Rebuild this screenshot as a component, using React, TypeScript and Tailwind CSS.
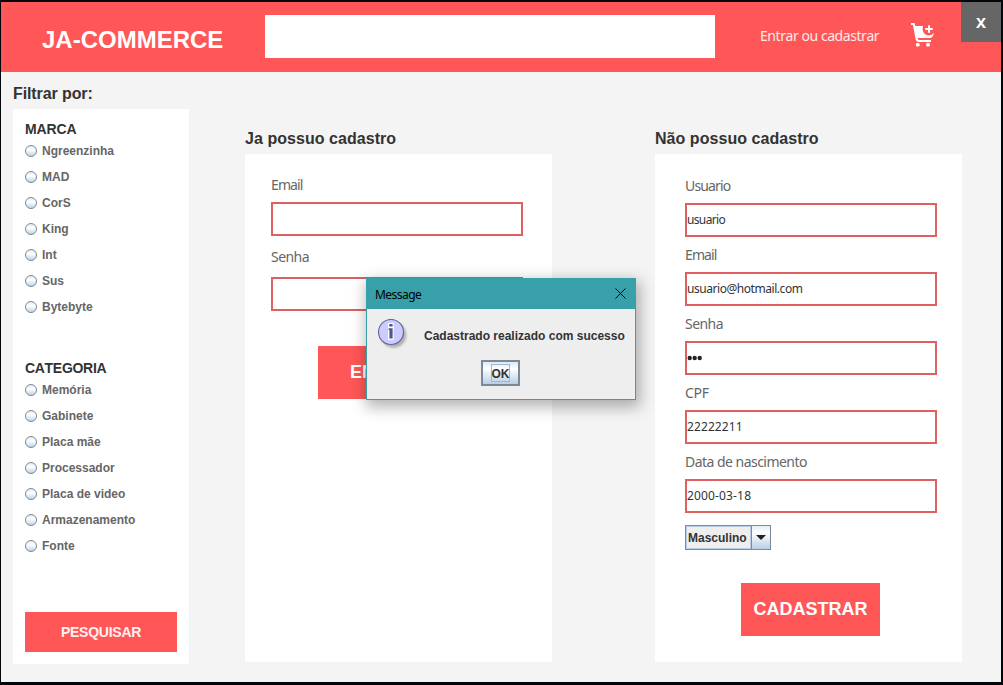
import React from "react";

const tahoma = "font-['Noto_Sans',sans-serif] font-normal";

function Radio({ label }: { label: string }) {
  return (
    <label className="flex h-[26px] items-center text-[12px] font-bold text-[#666]">
      <svg width="13" height="13" viewBox="0 0 13 13" className="mr-[4px] shrink-0">
        <defs>
          <linearGradient id="radio" x1="0" y1="0" x2="0" y2="1">
            <stop offset="0" stopColor="#dde8f3" />
            <stop offset=".4" stopColor="#ffffff" />
            <stop offset="1" stopColor="#b8cfe5" />
          </linearGradient>
        </defs>
        <circle cx="6" cy="6" r="5.5" fill="url(#radio)" stroke="#7a8a99" strokeWidth="1" />
      </svg>
      {label}
    </label>
  );
}

type FieldProps = {
  label: string;
  labelClass: string;
  value?: React.ReactNode;
  valueClass?: string;
  gap?: string;
};

function Field({ label, labelClass, value, valueClass = "", gap = "gap-[7px]" }: FieldProps) {
  return (
    <div className={"flex flex-col " + gap}>
      <span className={tahoma + " h-[20px] whitespace-nowrap text-[14px] leading-[20px] text-[#666] " + labelClass}>{label}</span>
      <div className={tahoma + " flex h-[34px] w-[252px] items-center border-2 border-[#de6060] bg-white text-[12px] text-[#333] " + valueClass}>
        {value}
      </div>
    </div>
  );
}

function Bullets() {
  return (
    <svg width="16" height="6" viewBox="0 0 16 6" fill="#222">
      <circle cx="2.7" cy="3" r="2.2" />
      <circle cx="7.7" cy="3" r="2.2" />
      <circle cx="12.7" cy="3" r="2.2" />
    </svg>
  );
}

function CartIcon() {
  return (
    <svg width="24" height="25" viewBox="0 0 24 25" fill="none">
      <path d="M0 1H2.8L5.3 14.5Q5.8 18 8 18H20" stroke="#fff" strokeWidth="2" />
      <path d="M2.6 3H12C10.6 7.6 13 12.4 18 12.4Q21 12.2 22.9 10Q22 15 18.5 15H5.4Z" fill="#fff" />
      <path d="M18 2.2V9.8M14.2 6H21.8" stroke="#fff" strokeWidth="2" />
      <circle cx="6.8" cy="21.8" r="2" fill="#fff" />
      <circle cx="17" cy="21.8" r="2" fill="#fff" />
    </svg>
  );
}

function InfoIcon() {
  return (
    <svg width="32" height="32" viewBox="0 0 32 32">
      <defs>
        <filter id="soft" x="-20%" y="-20%" width="140%" height="140%">
          <feGaussianBlur stdDeviation="1.2" />
        </filter>
      </defs>
      <circle cx="15.5" cy="16" r="12.8" fill="#888" opacity=".6" filter="url(#soft)" />
      <circle cx="13" cy="13" r="12.5" fill="#ccccff" stroke="#666699" strokeWidth="1.2" />
      <path d="M10 4H15.6V20.8H10V10.5H10V8.2H10Z" fill="#fff" />
      <path d="M11.3 5H14.6V7.4H11.3ZM10.6 9.2H14.6V19.6H11.4V11H10.6Z" fill="#555588" />
    </svg>
  );
}

const brands = ["Ngreenzinha", "MAD", "CorS", "King", "Int", "Sus", "Bytebyte"];
const categories = ["Memória", "Gabinete", "Placa mãe", "Processador", "Placa de video", "Armazenamento", "Fonte"];

export default function App() {
  return (
    <div className="relative h-[685px] w-[1003px] overflow-hidden bg-[#02060b] pl-px pt-[2px] font-['Liberation_Sans',Arial,sans-serif] [font-kerning:none]">
      <div className="flex h-[680px] w-[1000px] flex-col bg-[#f4f4f4]">
        <header className="flex h-[70px] items-start bg-[#ff5757] text-white">
          <h1 className="ml-[41px] mt-[23px] w-[223px] text-[24px] font-bold leading-[30px]">JA-COMMERCE</h1>
          <div className="mt-[13px] h-[43px] w-[450px] bg-white" />
          <span className={tahoma + " ml-[45px] mt-[24px] w-[151px] whitespace-nowrap text-[14px] leading-[20px] tracking-[-0.44px] text-[#ffeaea]"}>Entrar ou cadastrar</span>
          <div className="mt-[21px] w-[50px]"><CartIcon /></div>
          <button className="h-[40px] w-[40px] bg-[#666] pt-px font-['Noto_Sans',sans-serif] text-[15px] font-bold">X</button>
        </header>

        <div className="flex items-start">
          <aside className="ml-[12px] mt-[12px] w-[176px]">
            <h2 className="h-[25px] text-[16px] font-bold leading-[20px] tracking-[-0.1px] text-[#333]">Filtrar por:</h2>
            <div className="flex h-[555px] flex-col bg-white px-[12px] pt-[12px]">
              <h3 className="h-[17px] text-[14px] font-bold leading-[17px] tracking-[-0.1px] text-[#333]">MARCA</h3>
              {brands.map((b) => <Radio key={b} label={b} />)}
              <h3 className="mt-[40px] h-[17px] text-[14px] font-bold leading-[17px] tracking-[-0.3px] text-[#333]">CATEGORIA</h3>
              {categories.map((c) => <Radio key={c} label={c} />)}
              <button className="mt-[53px] h-[40px] w-[152px] bg-[#ff5757] text-[14px] font-bold tracking-[-0.25px] text-[#fff0f0]">PESQUISAR</button>
            </div>
          </aside>

          <section className="ml-[56px] mt-[57px] w-[307px]">
            <h2 className="h-[25px] text-[16px] font-bold leading-[20px] tracking-[0.05px] text-[#333]">Ja possuo cadastro</h2>
            <div className="flex h-[508px] flex-col bg-white pl-[26px] pt-[21px]">
              <Field label="Email" labelClass="tracking-[-0.9px]" />
              <div className="h-[11px]" />
              <Field label="Senha" labelClass="tracking-[-0.55px]" gap="gap-[10px]" />
              <button className="ml-[47px] mt-[35px] h-[53px] w-[139px] bg-[#ff5757] text-[18px] font-bold text-white">ENTRAR</button>
            </div>
          </section>

          <section className="ml-[103px] mt-[57px] w-[307px]">
            <h2 className="h-[25px] text-[16px] font-bold leading-[20px] tracking-[0.05px] text-[#333]">Não possuo cadastro</h2>
            <div className="flex h-[508px] flex-col bg-white pl-[30px] pt-[22px]">
              <div className="flex flex-col gap-[8px]">
                <Field label="Usuario" labelClass="tracking-[-0.85px]" value="usuario" valueClass="tracking-[-0.65px]" />
                <Field label="Email" labelClass="tracking-[-0.9px]" value="usuario@hotmail.com" valueClass="tracking-[-0.45px]" />
                <Field label="Senha" labelClass="tracking-[-0.55px]" value={<Bullets />} />
                <Field label="CPF" labelClass="tracking-[-0.3px]" value="22222211" valueClass="tracking-[0.1px]" />
                <Field label="Data de nascimento" labelClass="tracking-[-0.53px]" value="2000-03-18" valueClass="tracking-[0.15px]" />
              </div>
              <div className="mt-[12px] flex h-[25px] w-[86px] border border-[#7a8a99] bg-[#eee] text-[12px] font-bold text-[#333]">
                <span className="flex w-[65px] items-center border border-[#b8cfe5] pl-[1px]">Masculino</span>
                <span className="flex flex-1 items-center justify-center border-l border-[#7a8a99] bg-linear-to-b from-[#e4edf6] via-white via-30% to-[#b8cfe5]">
                  <svg width="10" height="5" viewBox="0 0 10 5"><path d="M0 0H10L5 5Z" fill="#222" /></svg>
                </span>
              </div>
              <button className="ml-[56px] mt-[33px] h-[53px] w-[139px] bg-[#ff5757] text-[18px] font-bold text-white">CADASTRAR</button>
            </div>
          </section>
        </div>
      </div>

      <div role="dialog" className="absolute left-[366px] top-[278px] flex h-[122px] w-[270px] flex-col border border-[#37a0a9] bg-[#eee] shadow-[2px_5px_14px_2px_rgba(0,0,0,0.3)]">
        <div className="flex h-[30px] items-center justify-between bg-[#37a0a9] pl-[8px] pr-[9px]">
          <span className={tahoma + " pt-px text-[12px] tracking-[-0.55px] text-black"}>Message</span>
          <svg width="11" height="11" viewBox="0 0 11 11" className="-mt-[2px]"><path d="M.5 .5L10.5 10.5M10.5 .5L.5 10.5" stroke="#000" strokeWidth="1" /></svg>
        </div>
        <div className="flex h-[50px] pl-[11px] pt-[10px]">
          <InfoIcon />
          <span className="ml-[14px] mt-[8px] whitespace-nowrap text-[12px] font-bold leading-[18px] text-[#333]">Cadastrado realizado com sucesso</span>
        </div>
        <button className="ml-[114px] mt-px flex h-[26px] w-[39px] items-center justify-center border-2 border-[#7a8a99] bg-linear-to-b from-[#dde8f3] via-white via-30% to-[#b8cfe5] text-[12px] font-bold text-[#333]">
          <span className="flex h-[18px] w-[19px] items-center justify-center border border-[#a3b8cc] pt-px">OK</span>
        </button>
      </div>
    </div>
  );
}
